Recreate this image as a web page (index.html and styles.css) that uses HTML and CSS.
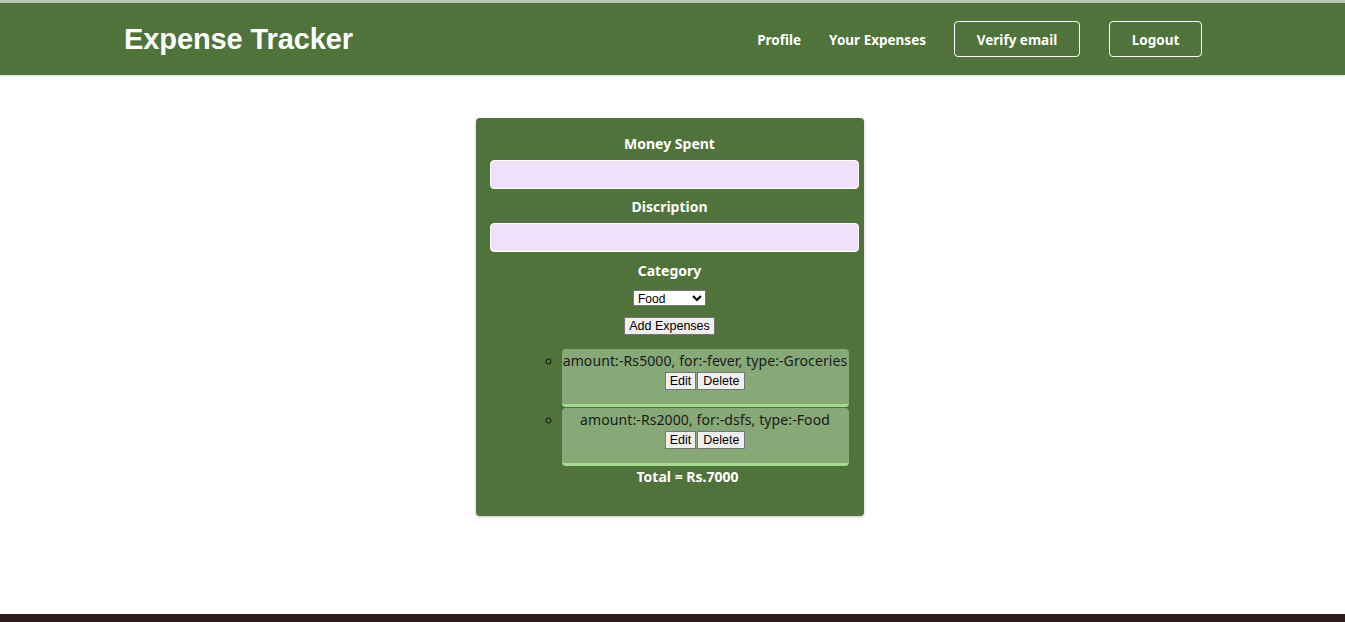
FILE: index.html
```html
<!DOCTYPE html>
<html>
<head>
<meta charset="utf-8">
<link rel="stylesheet" href="styles.css">
</head>
<body>
<div class="topline"></div>
<header class="header">
  <h1 class="brand">Expense Tracker</h1>
  <nav class="nav">
    <a class="nav-link">Profile</a>
    <a class="nav-link">Your Expenses</a>
    <button class="nav-btn verify">Verify email</button>
    <button class="nav-btn logout">Logout</button>
  </nav>
</header>
<main class="main">
  <form class="card">
    <label class="label">Money Spent</label>
    <input class="field" type="text">
    <label class="label">Discription</label>
    <input class="field" type="text">
    <label class="label cat">Category</label>
    <select class="select"><option>Food</option><option>Groceries</option></select>
    <button type="button" class="add-btn">Add Expenses</button>
    <ul class="list">
      <li class="item">
        <div class="item-text">amount:-Rs5000, for:-fever, type:-Groceries</div>
        <div class="item-actions"><button type="button" class="small-btn">Edit</button><button type="button" class="small-btn">Delete</button></div>
      </li>
      <li class="item">
        <div class="item-text">amount:-Rs2000, for:-dsfs, type:-Food</div>
        <div class="item-actions"><button type="button" class="small-btn">Edit</button><button type="button" class="small-btn">Delete</button></div>
      </li>
    </ul>
    <div class="total">Total = Rs.7000</div>
  </form>
</main>
<div class="taskbar"></div>
</body>
</html>
```
FILE: styles.css
```css
* { box-sizing: border-box; }
html, body { margin: 0; padding: 0; height: 100%; }
body {
  background: #ffffff;
  font-family: "Noto Sans", "Open Sans", sans-serif;
  display: flex;
  flex-direction: column;
  min-height: 622px;
  overflow: hidden;
}
.topline { height: 3px; background: #b9c9b3; }
.header {
  height: 72px;
  background: #4f733a;
  display: flex;
  align-items: center;
  padding: 0 143px 0 124px;
  box-shadow: 0 1px 2px rgba(0,0,0,0.15);
}
.brand {
  margin: 0;
  font-family: "Liberation Sans", Arial, sans-serif;
  font-size: 29px;
  font-weight: bold;
  color: #fff;
  flex: 1;
  letter-spacing: -0.1px;
}
.nav { display: flex; align-items: center; }
.nav-link {
  color: #fff;
  font-weight: bold;
  font-size: 13.5px;
  margin-right: 28px;
  padding-top: 2px;
}
.nav-btn {
  background: transparent;
  border: 1px solid #fff;
  border-radius: 4px;
  color: #fff;
  font-family: "Noto Sans", "Open Sans", sans-serif;
  font-weight: bold;
  font-size: 13.5px;
  height: 36px;
  padding: 2px 0 0 0;
}
.verify { width: 126px; margin-right: 29px; }
.logout { width: 93px; }
.main {
  flex: 1;
  display: flex;
  justify-content: center;
  align-items: flex-start;
  padding-top: 43px;
}
.card {
  width: 388px;
  height: 398px;
  background: #4f733a;
  border-radius: 4px;
  box-shadow: 0 1px 3px rgba(0,0,0,0.25);
  padding: 16px 14px 0 14px;
  display: flex;
  flex-direction: column;
  align-items: center;
  margin-left: -6px;
}
.label {
  color: #fff;
  font-weight: bold;
  font-size: 14px;
  line-height: 20px;
  margin-bottom: 6px;
}
.field {
  align-self: flex-start;
  width: 369px;
  flex-shrink: 0;
  height: 29px;
  background: #f0e0fb;
  border: 1px solid #fff;
  border-radius: 4px;
  margin-bottom: 8px;
}
.cat { margin-top: 1px; margin-bottom: 10px; }
.select {
  width: 73px;
  height: 16px;
  font-family: "Liberation Sans", Arial, sans-serif;
  font-size: 12px;
  padding: 0;
  border: 1px solid #767676;
  border-radius: 0;
  background: #fff;
  margin-bottom: 11px;
  margin-top: -1px;
}
.add-btn {
  font-family: "Liberation Sans", Arial, sans-serif;
  font-size: 12.5px;
  height: 18px;
  padding: 0 4px;
  background: #efefef;
  border: 1px solid #767676;
  border-radius: 0;
  color: #000;
}
.list {
  list-style: circle;
  align-self: stretch;
  margin: 14px 1px 0 0;
  padding: 0 0 0 72px;
}
.item {
  background: #87a877;
  border-radius: 4px;
  border-bottom: 3px solid #a6da93;
  height: 58px;
  margin-bottom: 1px;
  text-align: center;
  color: #1b1b1b;
  font-size: 14px;
  padding-top: 1px;
}
.item::marker { color: #111; font-size: 13px; }
.item-text { line-height: 21px; white-space: nowrap; letter-spacing: 0.1px; padding-bottom: 1px; }
.item-actions { display: flex; justify-content: center; }
.small-btn {
  font-family: "Liberation Sans", Arial, sans-serif;
  font-size: 12.5px;
  height: 18px;
  padding: 0 5px;
  background: #efefef;
  border: 1px solid #767676;
  border-radius: 0;
  color: #000;
  margin: 0;
}
.small-btn:first-child { padding: 0 4px; margin-right: 1px; }
.total {
  color: #fff;
  font-weight: bold;
  font-size: 14px;
  margin-top: 0;
  margin-left: 36px;
  line-height: 20px;
}
.taskbar { height: 8px; background: #2b1d1d; }
```
